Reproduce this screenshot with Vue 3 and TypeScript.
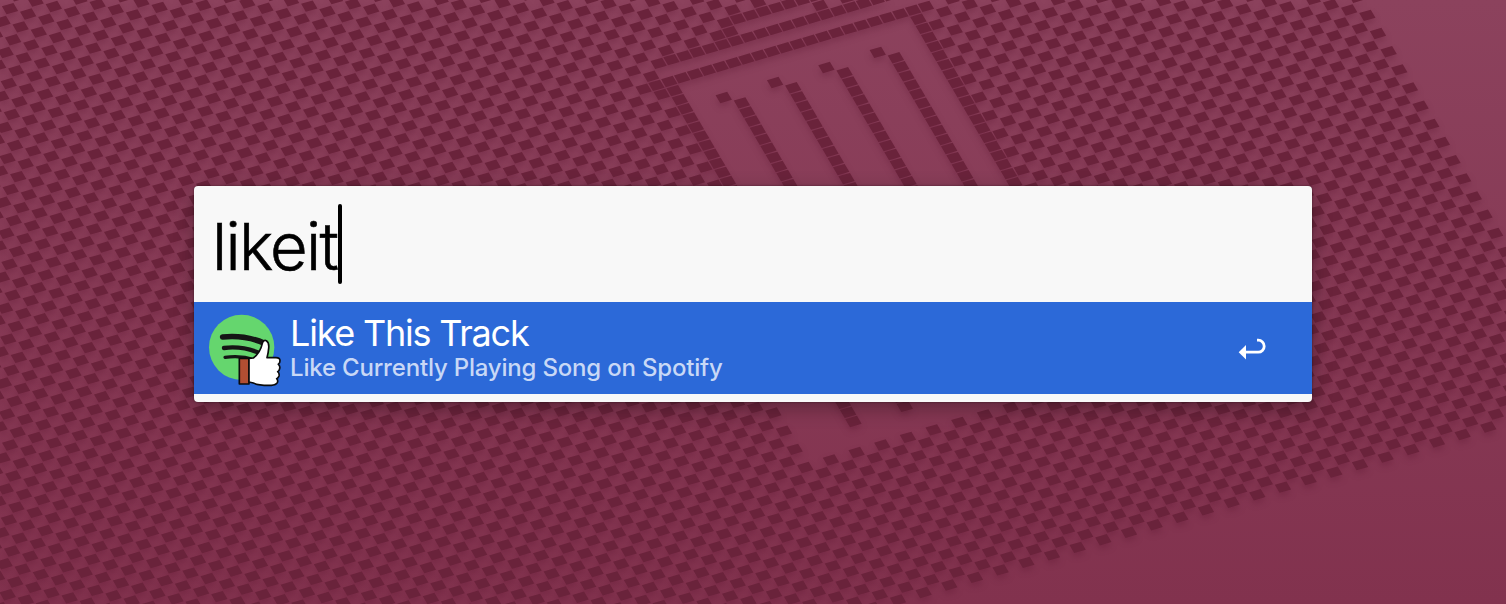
<script setup lang="ts">
import { ref } from 'vue'

interface Result {
  title: string
  subtitle: string
}

const query = ref('likeit')
const result: Result = {
  title: 'Like This Track',
  subtitle: 'Like Currently Playing Song on Spotify',
}

// Basis vectors of the woven wallpaper lattice
const origin = { x: 10, y: 8.67 }
const u = { x: 12.833, y: -3.761 }
const v = { x: 5.325, y: 9.084 }

function hasTile(i: number, j: number): boolean {
  const checker = (i + j) % 2 === 0
  if (i > 90 || j > 80) return false
  if (j === 25 && i >= 39 && i <= 61) return true
  if (j === 24 && i >= 41 && i <= 60) return false
  if (j === 23 && i >= 41 && i <= 61) return true
  if (j === 22 && i >= 48 && i <= 53) return false
  if (j === 22 && i === 47) return true
  if (j === 21 && i >= 47 && i <= 61) return true
  if (j > 25 && j < 48) {
    if (i === 41 || i === 60) return true
    if (i > 41 && i < 60) {
      if (j === 28) return i % 4 === 0 && i >= 44 && i <= 56
      return j >= 29 && i % 4 === 1 && i >= 45 && i <= 57
    }
  }
  if (j >= 48 && j < 65 && i > 35 && i < 60) {
    return (i === 40 || i === 44) && j <= 62
  }
  return checker
}

function tilePath(): string {
  const ku = 0.452
  const kv = 0.44
  const a = { x: u.x * ku + v.x * kv, y: u.y * ku + v.y * kv }
  const b = { x: u.x * ku - v.x * kv, y: u.y * ku - v.y * kv }
  let d = ''
  for (let j = -8; j <= 80; j++) {
    for (let i = -40; i <= 112; i++) {
      const x = origin.x + i * u.x + j * v.x
      const y = origin.y + i * u.y + j * v.y
      if (x < -20 || x > 1526 || y < -20 || y > 624) continue
      if (!hasTile(i, j)) continue
      d += `M${(x + a.x).toFixed(2)} ${(y + a.y).toFixed(2)}L${(x + b.x).toFixed(2)} ${(y + b.y).toFixed(2)}`
      d += `L${(x - a.x).toFixed(2)} ${(y - a.y).toFixed(2)}L${(x - b.x).toFixed(2)} ${(y - b.y).toFixed(2)}Z`
    }
  }
  return d
}

const tiles = tilePath()
</script>

<template>
  <main class="desktop">
    <svg class="weave" width="1506" height="604" viewBox="0 0 1506 604" aria-hidden="true">
      <path :d="tiles" fill="#6a233b" />
    </svg>
    <section class="launcher">
      <div class="search">
        <span class="query">{{ query }}</span><span class="caret"></span>
      </div>
      <div class="result">
        <svg class="icon" viewBox="54 42 222 219" aria-hidden="true">
          <circle cx="155" cy="142" r="98" fill="#65d66e" />
          <g fill="none" stroke="#151515" stroke-linecap="round">
            <path d="M98 111Q165 104 224 130" stroke-width="17" />
            <path d="M102 144Q158 137 211 160" stroke-width="13" />
            <path d="M105 172Q151 165 194 179" stroke-width="9.5" />
          </g>
          <g stroke="#0b0b0b" stroke-width="5" stroke-linejoin="round">
            <path d="M148 175H177V252H148Z" fill="#b14e32" />
            <path
              d="M177 175L190 174Q211 158 217 130Q220 119 229 122Q238 127 236 145Q235 158 231 173H258Q270 173 270 182Q270 190 265 193Q271 198 269 206Q268 213 263 215Q269 220 267 228Q265 234 260 236Q265 241 262 248Q258 255 244 256Q207 257 190 249L177 246Z"
              fill="#fff"
            />
          </g>
        </svg>
        <div class="labels">
          <div class="title">{{ result.title }}</div>
          <div class="subtitle">{{ result.subtitle }}</div>
        </div>
        <svg class="return" viewBox="0 0 28 24" aria-hidden="true">
          <path d="M19 3.2H20.2A5.5 5.5 0 0 1 20.2 15.2H8" fill="none" stroke="#fff" stroke-width="2.8" />
          <path d="M0.7 15.2L8 8V22.4Z" fill="#fff" />
        </svg>
      </div>
    </section>
  </main>
</template>

<style>
body {
  margin: 0;
}
</style>

<style scoped>
.desktop {
  position: relative;
  box-sizing: border-box;
  width: 1506px;
  height: 604px;
  padding: 186px 194px 0;
  overflow: hidden;
  background: linear-gradient(#8c425d, #82324e);
  font-family: Inter, 'Liberation Sans', sans-serif;
}
.weave {
  position: absolute;
  inset: 0;
  filter: drop-shadow(0 4px 3px rgba(90, 20, 48, 0.3));
}
.launcher {
  position: relative;
  box-sizing: border-box;
  width: 1118px;
  height: 216px;
  overflow: hidden;
  border-radius: 4px;
  background: #f8f8f8;
  box-shadow: 0 0 2px rgba(0, 0, 0, 0.5), 0 6px 20px rgba(0, 0, 0, 0.3);
}
.search {
  display: flex;
  align-items: flex-start;
  height: 116px;
  padding-left: 18px;
  box-sizing: border-box;
}
.query {
  margin-top: 22px;
  width: 126px;
  font-size: 65px;
  line-height: 78px;
  font-weight: 300;
  letter-spacing: -1.7px;
  -webkit-text-stroke: 0.6px #000;
  color: #000;
  white-space: nowrap;
}
.caret {
  width: 4px;
  height: 80px;
  margin-top: 18px;
  border-radius: 2px;
  background: #000;
}
.result {
  display: flex;
  height: 92px;
  background: #2c69d8;
}
.icon {
  width: 74px;
  height: 73px;
  margin: 12px 8px 0 14px;
}
.labels {
  flex: 1;
  white-space: nowrap;
}
.title {
  margin-top: 9px;
  font-size: 36px;
  line-height: 44px;
  letter-spacing: -1.22px;
  color: #fff;
}
.subtitle {
  margin-top: -2px;
  font-size: 24px;
  line-height: 30px;
  font-weight: 450;
  letter-spacing: -0.19px;
  color: #c8d8f6;
}
.return {
  width: 28px;
  height: 24px;
  margin: 35px 46px 0 0;
}
</style>
